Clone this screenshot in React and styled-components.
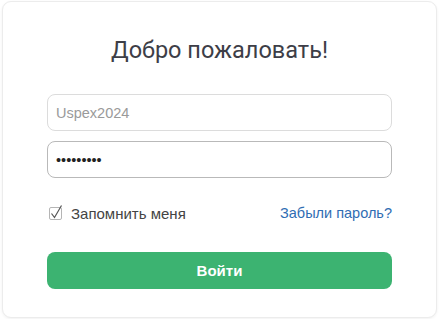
import styled, { createGlobalStyle } from "styled-components";

const GlobalStyle = createGlobalStyle`
  body {
    margin: 0;
    background: #ffffff;
    font-family: "Liberation Sans", Arial, sans-serif;
  }
`;

const Card = styled.div`
  width: 435px;
  height: 317px;
  margin: 1px 2px;
  box-sizing: border-box;
  padding: 35px 44px 0 44px;
  background: #ffffff;
  border: 1px solid #ececec;
  border-radius: 9px;
  box-shadow: 0 1px 3px rgba(0, 0, 0, 0.06);
  display: flex;
  flex-direction: column;
`;

const Title = styled.h1`
  margin: 0 0 30px 0;
  font-family: "Roboto", sans-serif;
  font-weight: 400;
  font-size: 23.5px;
  line-height: 27px;
  color: #3d3e47;
  text-align: center;
`;

const Field = styled.input`
  height: 37px;
  box-sizing: border-box;
  width: 100%;
  margin: 0 0 ${(props) => (props.last ? "25px" : "10px")} 0;
  padding: 0 8px;
  border: 1px solid ${(props) => (props.active ? "#b9b9b9" : "#dcdcdc")};
  border-radius: 8px;
  font-family: "Liberation Sans", Arial, sans-serif;
  font-size: 14.5px;
  color: #222;
  outline: none;
  &::placeholder {
    color: #9a9a9a;
  }
`;

const Row = styled.div`
  height: 20px;
  display: flex;
  align-items: center;
  justify-content: space-between;
  margin-bottom: 29px;
`;

const Remember = styled.label`
  display: flex;
  align-items: center;
  gap: 9px;
  font-size: 15px;
  color: #444;
`;

const Box = styled.span`
  width: 11px;
  height: 11px;
  border: 1px solid #b5b5b5;
  border-radius: 2px;
  position: relative;
  margin-left: 2px;
  svg {
    position: absolute;
    left: 0;
    top: -3px;
  }
`;

const Forgot = styled.a`
  font-size: 14.5px;
  color: #2f6db3;
  text-decoration: none;
`;

const Button = styled.button`
  height: 37px;
  width: 100%;
  border: none;
  border-radius: 8px;
  background: #3cb371;
  color: #ffffff;
  font-family: "Liberation Sans", Arial, sans-serif;
  font-weight: 700;
  font-size: 15px;
`;

export default function App() {
  return (
    <>
      <GlobalStyle />
      <Card>
        <Title>Добро пожаловать!</Title>
        <Field placeholder="Uspex2024" />
        <Field type="password" defaultValue="123456789" active last />
        <Row>
          <Remember>
            <Box>
              <svg width="13" height="15" viewBox="0 0 13 15">
                <path d="M1.5 8.5 L4.5 12.5 L11.5 0.5" fill="none" stroke="#555" strokeWidth="1.2" />
              </svg>
            </Box>
            Запомнить меня
          </Remember>
          <Forgot href="#">Забыли пароль?</Forgot>
        </Row>
        <Button>Войти</Button>
      </Card>
    </>
  );
}
